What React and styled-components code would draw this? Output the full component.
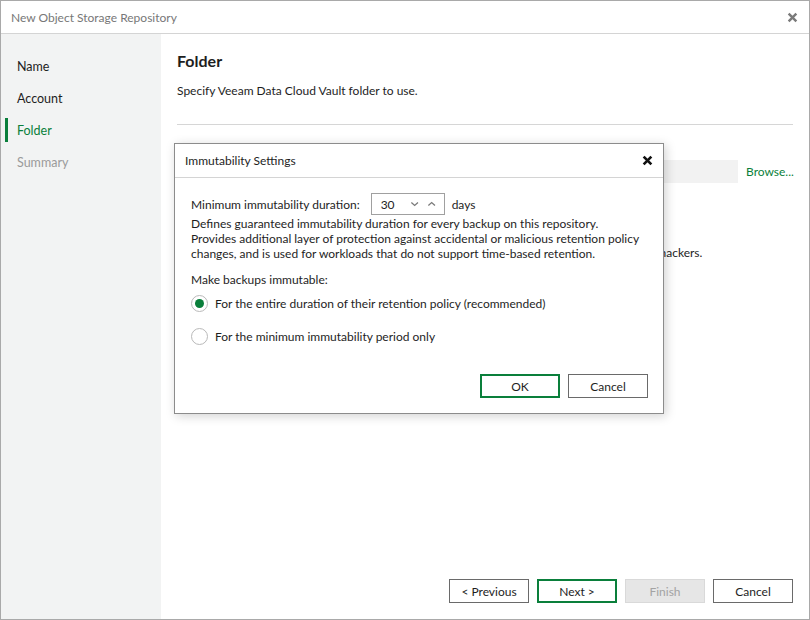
import React from "react";
import styled, { createGlobalStyle } from "styled-components";

const GREEN = "#0a7f3b";

const Global = createGlobalStyle`
  html, body { margin: 0; padding: 0; background: #fff; }
  body { font-family: "Lato", "Noto Sans", sans-serif; font-size: 12px; color: #1e1e1e; }
  * { box-sizing: border-box; }
`;

const Window = styled.div`
  position: relative;
  width: 810px;
  height: 620px;
  border: 1px solid #a9a9a9;
  display: flex;
  flex-direction: column;
  background: #fff;
`;

const TitleBar = styled.div`
  height: 33px;
  flex: none;
  display: flex;
  align-items: center;
  justify-content: space-between;
  padding: 0 11px 0 10px;
  border-bottom: 1px solid #d4d4d4;
  color: #777;
  font-size: 12px;
`;

const Body = styled.div`
  flex: 1;
  display: flex;
  min-height: 0;
`;

const Sidebar = styled.nav`
  width: 160px;
  flex: none;
  background: #f2f3f3;
  padding-top: 16px;
  display: flex;
  flex-direction: column;
`;

const Step = styled.div`
  position: relative;
  height: 32px;
  display: flex;
  align-items: center;
  padding-left: 16px;
  font-size: 12.5px;
  color: ${(p) => (p.$state === "active" ? GREEN : p.$state === "todo" ? "#9a9a9a" : "#1e1e1e")};
  &::before {
    content: "";
    display: ${(p) => (p.$state === "active" ? "block" : "none")};
    position: absolute;
    left: 4px;
    top: 4px;
    width: 3px;
    height: 24px;
    background: ${GREEN};
  }
`;

const Main = styled.main`
  flex: 1;
  display: flex;
  flex-direction: column;
  padding: 16px 16px 16px 16px;
`;

const Heading = styled.h1`
  margin: 0;
  font-size: 16px;
  font-weight: 700;
  line-height: 22px;
`;

const Subtitle = styled.p`
  margin: 10px 0 0 0;
  line-height: 18px;
`;

const Separator = styled.hr`
  border: none;
  border-top: 1px solid #d6d6d6;
  margin: 24px 0 0 0;
`;

const FieldRow = styled.div`
  display: flex;
  align-items: center;
  margin-top: 35px;
  gap: 8px;
`;

const FieldBox = styled.div`
  flex: 1;
  height: 23px;
  background: #f2f2f2;
`;

const Link = styled.span`
  color: ${GREEN};
  width: 47px;
  white-space: nowrap;
`;

const HiddenText = styled.p`
  margin: 62px 0 0 0;
  line-height: 15px;
  white-space: nowrap;
`;

const Spacer = styled.div`
  flex: 1;
`;

const Footer = styled.div`
  display: flex;
  justify-content: flex-end;
  gap: 8px;
`;

const Button = styled.button`
  width: 80px;
  height: 24px;
  font: inherit;
  font-size: 12px;
  padding: 0;
  background: ${(p) => (p.$disabled ? "#e6e6e6" : "#fff")};
  color: ${(p) => (p.$disabled ? "#a3a3a3" : "#1e1e1e")};
  border: ${(p) =>
    p.$primary ? `2px solid ${GREEN}` : p.$disabled ? "1px solid #d9d9d9" : "1px solid #6a6a6a"};
  cursor: default;
`;

const Dialog = styled.div`
  position: absolute;
  left: 173px;
  top: 142px;
  width: 490px;
  height: 271px;
  background: #fff;
  border: 1px solid #8c8c8c;
  box-shadow: 2px 2px 10px rgba(0, 0, 0, 0.18);
  display: flex;
  flex-direction: column;
`;

const DialogTitle = styled.div`
  height: 34px;
  flex: none;
  display: flex;
  align-items: center;
  justify-content: space-between;
  padding: 0 10px 0 10px;
  border-bottom: 1px solid #d4d4d4;
`;

const DialogBody = styled.div`
  flex: 1;
  display: flex;
  flex-direction: column;
  padding: 15px 15px 15px 16px;
  white-space: nowrap;
`;

const DurationRow = styled.div`
  display: flex;
  align-items: center;
  height: 22px;
`;

const Spinner = styled.div`
  width: 74px;
  height: 22px;
  margin: 0 7px 0 11px;
  border: 1px solid #a0a0a0;
  display: flex;
  align-items: center;
  padding-left: 9px;
`;

const SpinValue = styled.span`
  width: 30px;
`;

const Chevron = styled.svg`
  width: 12px;
  height: 8px;
  margin-right: 6px;
`;

const Desc = styled.p`
  margin: 1px 0 0 0;
  line-height: 15px;
`;

const Label = styled.div`
  margin-top: 11px;
  line-height: 15px;
`;

const RadioRow = styled.label`
  display: flex;
  align-items: center;
  gap: 7px;
  height: 33px;
`;

const RadioCircle = styled.span`
  width: 17px;
  height: 17px;
  border-radius: 50%;
  border: 1px solid #b9b9b9;
  background: #fff;
  display: flex;
  align-items: center;
  justify-content: center;
  &::after {
    content: "";
    width: 9px;
    height: 9px;
    border-radius: 50%;
    background: ${GREEN};
    display: ${(p) => (p.$checked ? "block" : "none")};
  }
`;

const DialogFooter = styled.div`
  margin-top: auto;
  display: flex;
  justify-content: flex-end;
  gap: 8px;
`;

const CloseIcon = ({ color, size, weight }) => (
  <svg width={size} height={size} viewBox="0 0 10 10">
    <path d="M1.5 1.5 L8.5 8.5 M8.5 1.5 L1.5 8.5" stroke={color} strokeWidth={weight} strokeLinecap="butt" />
  </svg>
);

export default function App() {
  return (
    <>
      <Global />
      <Window>
        <TitleBar>
          <span>New Object Storage Repository</span>
          <CloseIcon color="#7a7a7a" size={11} weight={2.2} />
        </TitleBar>
        <Body>
          <Sidebar>
            <Step>Name</Step>
            <Step>Account</Step>
            <Step $state="active">Folder</Step>
            <Step $state="todo">Summary</Step>
          </Sidebar>
          <Main>
            <Heading>Folder</Heading>
            <Subtitle>Specify Veeam Data Cloud Vault folder to use.</Subtitle>
            <Separator />
            <FieldRow>
              <FieldBox />
              <Link>Browse...</Link>
            </FieldRow>
            <HiddenText>
              Immutable backups are protected against deletion and modification by the ransomware and hackers.
            </HiddenText>
            <Spacer />
            <Footer>
              <Button>&lt; Previous</Button>
              <Button $primary>Next &gt;</Button>
              <Button $disabled>Finish</Button>
              <Button>Cancel</Button>
            </Footer>
          </Main>
        </Body>

        <Dialog>
          <DialogTitle>
            <span>Immutability Settings</span>
            <CloseIcon color="#111" size={11} weight={2.4} />
          </DialogTitle>
          <DialogBody>
            <DurationRow>
              <span>Minimum immutability duration:</span>
              <Spinner>
                <SpinValue>30</SpinValue>
                <Chevron viewBox="0 0 12 8">
                  <path d="M2.5 2.5 L6 5.5 L9.5 2.5" fill="none" stroke="#7a7a7a" strokeWidth="1.4" />
                </Chevron>
                <Chevron viewBox="0 0 12 8">
                  <path d="M2.5 5.5 L6 2.5 L9.5 5.5" fill="none" stroke="#7a7a7a" strokeWidth="1.4" />
                </Chevron>
              </Spinner>
              <span>days</span>
            </DurationRow>
            <Desc>
              Defines guaranteed immutability duration for every backup on this repository.
              <br />
              Provides additional layer of protection against accidental or malicious retention policy
              <br />
              changes, and is used for workloads that do not support time-based retention.
            </Desc>
            <Label>Make backups immutable:</Label>
            <RadioRow>
              <RadioCircle $checked />
              <span>For the entire duration of their retention policy (recommended)</span>
            </RadioRow>
            <RadioRow>
              <RadioCircle />
              <span>For the minimum immutability period only</span>
            </RadioRow>
            <DialogFooter>
              <Button $primary>OK</Button>
              <Button>Cancel</Button>
            </DialogFooter>
          </DialogBody>
        </Dialog>
      </Window>
    </>
  );
}
